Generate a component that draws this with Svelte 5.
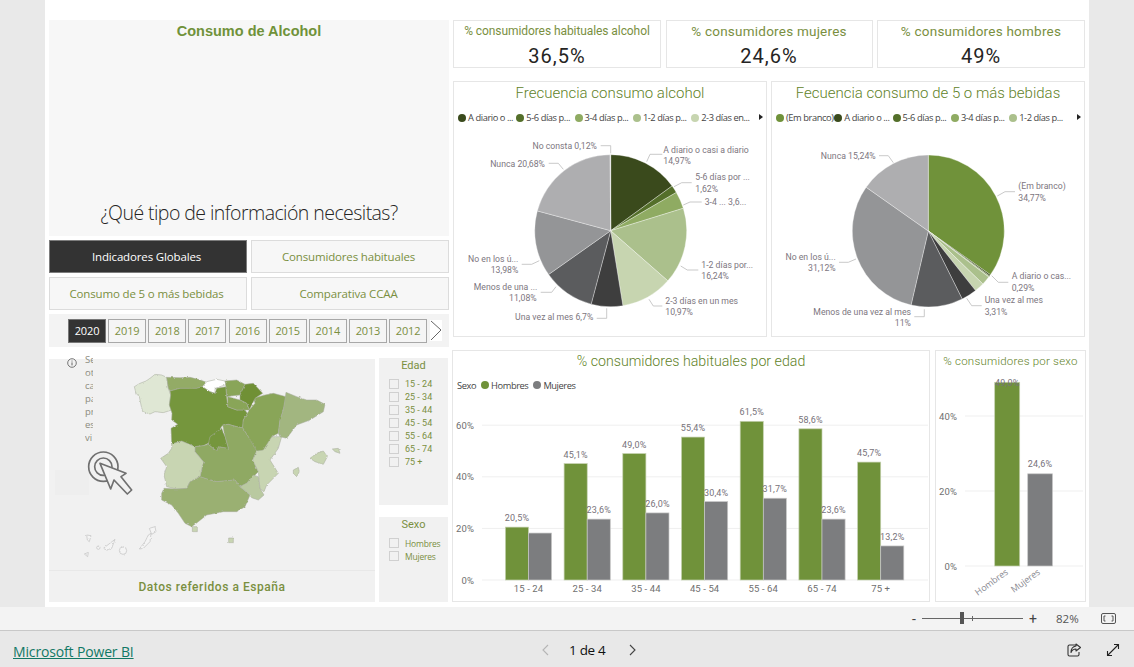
<script>
  const R = 76;
  function slices(data, cx, cy) {
    let a = 0;
    return data.map(([v, c]) => {
      const a0 = a; a += v / 100 * Math.PI * 2;
      const p = (t) => `${(cx + R * Math.sin(t)).toFixed(2)} ${(cy - R * Math.cos(t)).toFixed(2)}`;
      const large = a - a0 > Math.PI ? 1 : 0;
      return { d: `M${cx} ${cy}L${p(a0)}A${R} ${R} 0 ${large} 1 ${p(a)}Z`, c };
    });
  }
  const pieA = slices([[14.97,'#3a4a1c'],[1.62,'#546f2a'],[3.64,'#8fab62'],[16.24,'#abc08c'],[10.97,'#c7d5b0'],[6.7,'#3e3e3e'],[11.08,'#5b5c5e'],[13.98,'#949597'],[20.68,'#aeaeb0'],[0.12,'#d0d0d0']], 610.7, 230.7);
  const pieB = slices([[34.77,'#70923a'],[0.29,'#3a4a1c'],[0.2,'#546f2a'],[0.1,'#8fab62'],[1.9,'#abc08c'],[2.07,'#c7d5b0'],[3.31,'#3e3e3e'],[11,'#5b5c5e'],[31.12,'#949597'],[15.24,'#aeaeb0']], 928.3, 231);

  const labelsA = [
    { l: '600.7,145.7 610.7,145.7 610.7,153.3', t: [[597,149,'end','No consta 0,12%']] },
    { l: '662.3,154.3 650,154.3 646.7,161.7', t: [[663.3,153.3,'start','A diario o casi a diario'],[663.3,164,'start','14,97%']] },
    { l: '691.7,182.7 681.7,182.7 674,186.7', t: [[695.3,180,'start','5-6 días por ...'],[695.3,192,'start','1,62%']] },
    { l: '701.7,202 690,202 683.3,205', t: [[704.7,205.3,'start','3-4 ... 3,6...']] },
    { l: '698.3,270 687.3,270 680.7,266', t: [[701.3,268.3,'start','1-2 días por...'],[701.3,279.3,'start','16,24%']] },
    { l: '662.3,306 653.3,306 649,299.3', t: [[665.3,304.3,'start','2-3 días en un mes'],[665.3,315.3,'start','10,97%']] },
    { l: '596.7,318.3 606.7,318.3 606.7,308.3', t: [[593.3,320,'end','Una vez al mes 6,7%']] },
    { l: '540.7,292.3 551.7,292.3 556,286.7', t: [[537.3,290.3,'end','Menos de una ...'],[536.7,301.3,'end','11,08%']] },
    { l: '521.7,264.3 531.7,264.3 539.3,260.7', t: [[518.3,262.3,'end','No en los ú...'],[518.3,273.3,'end','13,98%']] },
    { l: '548.7,163.3 558.3,163.3 563.3,169.3', t: [[545,167.3,'end','Nunca 20,68%']] }
  ];
  const labelsB = [
    { l: '879,155.7 888.3,155.7 893.3,162.7', t: [[875.7,159.3,'end','Nunca 15,24%']] },
    { l: '1015,191.7 1005,191.7 997.3,196', t: [[1018.3,189.3,'start','(Em branco)'],[1018.3,201.3,'start','34,77%']] },
    { l: '1008.3,282.3 998.3,282.3 991.7,275.7', t: [[1011.7,279.3,'start','A diario o cas...'],[1011.7,291.3,'start','0,29%']] },
    { l: '981.7,305.7 971.7,305.7 966.7,298.3', t: [[984.7,303.3,'start','Una vez al mes'],[984.7,315,'start','3,31%']] },
    { l: '914.3,316.7 924.3,316.7 924.3,309.3', t: [[911,315,'end','Menos de una vez al mes'],[911,326,'end','11%']] },
    { l: '839,262.3 848.3,262.3 856,259', t: [[835.7,260.3,'end','No en los ú...'],[835.7,271.3,'end','31,12%']] }
  ];
  const legendA = [['A diario o ...','#3a4a1c'],['5-6 días p...','#546f2a'],['3-4 días p...','#8fab62'],['1-2 días p...','#abc08c'],['2-3 días en...','#c7d5b0']];
  const legendB = [['(Em branco)','#70923a'],['A diario o ...','#3a4a1c'],['5-6 días p...','#546f2a'],['3-4 días p...','#8fab62'],['1-2 días p...','#abc08c']];

  const years = [2020,2019,2018,2017,2016,2015,2014,2013,2012];
  const ages = ['15 - 24','25 - 34','35 - 44','45 - 54','55 - 64','65 - 74','75 +'];
  const men = [20.5,45.1,49,55.4,61.5,58.6,45.7];
  const women = [18.2,23.6,26,30.4,31.7,23.6,13.2];
  const showW = [false,true,true,true,true,true,true];
  const Y0 = 580, K = 2.58, BW = 23.1, STEP = 58.7, X0 = 505.4;
  const fmt = (v) => v.toFixed(1).replace('.', ',') + '%';

  const regions = [
    ['#dfe7d4','283,125 300,115 318,108 330,100 345,88 365,90 380,97 385,130 392,150 388,180 395,195 370,203 345,200 330,207 308,200 303,180 298,155 288,145'],
    ['#93ab66','380,97 420,98 450,97 475,103 500,112 487,125 470,130 445,130 420,130 390,138 385,130'],
    ['#ffffff','487,125 500,110 530,103 555,108 560,118 540,125 525,130 525,145 510,140'],
    ['#75963e','390,138 420,130 470,130 487,125 510,140 525,145 530,130 558,125 560,155 563,185 590,195 615,195 622,205 610,225 608,248 590,245 565,238 548,240 530,268 505,295 490,302 465,305 425,290 395,297 393,250 413,238 395,225 396,205 388,180 392,150'],
    ['#8fa963','465,305 490,302 505,298 530,318 535,305 565,310 555,275 548,240 565,238 590,245 608,248 625,275 645,300 650,318 638,345 655,380 640,395 620,415 600,425 585,405 530,410 510,405 480,395 490,350 465,320'],
    ['#75963e','510,275 545,250 555,275 565,310 535,305 530,318 505,298'],
    ['#c8d5b2','395,297 425,288 465,305 465,320 490,350 480,395 450,410 440,430 410,432 380,425 372,390 380,365 362,340 385,325 395,310'],
    ['#9ab072','372,430 410,432 440,430 450,410 480,395 510,405 530,410 585,405 600,425 630,450 615,485 590,500 550,500 500,510 475,530 455,545 435,535 415,505 395,480 365,465 365,445'],
    ['#b9c9a0','600,425 620,415 640,390 655,395 660,430 672,450 655,465 635,458 625,445'],
    ['#c8d5b2','650,318 670,310 695,275 725,275 715,310 690,345 715,385 695,405 680,420 672,440 660,430 655,380 638,345'],
    ['#89a558','640,160 675,150 700,145 738,155 730,195 720,225 715,265 695,275 670,315 650,318 625,275 608,248 610,225 622,205 628,195 645,175'],
    ['#a2b680','738,142 770,155 800,165 830,165 855,178 850,200 810,225 770,240 740,280 720,275 715,265 720,225 730,195'],
    ['#89a558','558,125 555,108 590,105 615,118 600,150 580,152 560,155'],
    ['#6f9036','615,118 640,115 668,145 645,160 628,195 620,175 600,165 600,150'],
    ['#89a558','563,155 600,165 620,175 628,195 615,195 590,195 563,185'],
    ['#c8d5b2','810,340 830,325 850,318 862,335 850,358 825,350'],
    ['#c8d5b2','877,312 895,310 900,325 885,320'],
    ['#c8d5b2','760,375 775,367 778,380 770,395 760,385'],
    ['#c8d5b2','457,545 472,545 472,560 457,560'],
    ['#c8d5b2','566,579 580,579 580,593 566,593']
  ];
  const canary = [
    '328,550 345,545 348,560 335,568',
    '325,570 333,565 330,590 310,610 298,612 315,590',
    '190,610 225,583 215,610 200,615',
    '140,570 153,572 148,590 142,585',
    '133,627 145,622 143,635'
  ];
</script>

<div class="app">
  <div class="stage">
    <div class="page">
      <div class="left">
        <div class="hero">
          <div class="brand">Consumo de Alcohol</div>
          <div class="question">¿Qué tipo de información necesitas?</div>
        </div>
        <div class="nav">
          <div class="navbtn active">Indicadores Globales</div>
          <div class="navbtn">Consumidores habituales</div>
          <div class="navbtn">Consumo de 5 o más bebidas</div>
          <div class="navbtn">Comparativa CCAA</div>
        </div>
        <div class="years">
          {#each years as y, i}
            <div class="year" class:on={i === 0}>{y}</div>
          {/each}
          <div class="next">
            <svg width="12" height="20" viewBox="0 0 12 20"><polyline points="1,1 11,10 1,20" fill="none" stroke="#666" stroke-width="1"/></svg>
          </div>
        </div>
        <div class="lower">
          <div class="mappanel">
            <svg class="map" width="326" height="211" viewBox="27 42 978 633">
              <defs>
                <filter id="rough" x="-5%" y="-5%" width="110%" height="110%">
                  <feTurbulence type="fractalNoise" baseFrequency=".12" numOctaves="2" seed="4"/>
                  <feDisplacementMap in="SourceGraphic" scale="7" xChannelSelector="R" yChannelSelector="G"/>
                </filter>
              </defs>
              <rect x="45" y="375" width="102" height="75" fill="#eeeeee"/>
              <g filter="url(#rough)">
                {#each regions as [c, pts]}
                  <polygon points={pts} fill={c} stroke="#a9ab9f" stroke-width="1.6" stroke-linejoin="round"/>
                {/each}
                {#each canary as pts}
                  <polygon points={pts} fill="#f4f4f4" stroke="#c4c4c4" stroke-width="2.2" stroke-linejoin="round"/>
                {/each}
                <circle cx="249" cy="617" r="11" fill="#f4f4f4" stroke="#c4c4c4" stroke-width="2.2"/>
                <circle cx="175" cy="608" r="5" fill="#f4f4f4" stroke="#c4c4c4" stroke-width="2.2"/>
              </g>
              <circle cx="190" cy="365" r="44" fill="none" stroke="#707070" stroke-width="5"/>
              <circle cx="190" cy="365" r="26" fill="none" stroke="#707070" stroke-width="5"/>
              <polygon points="180,355 258,385 243,395 275,435 262,447 222,405 212,432" fill="#f1f1f1" stroke="#707070" stroke-width="5" stroke-linejoin="round"/>
            </svg>
            <div class="mapfoot">Datos referidos a España</div>
          </div>
          <div class="info">
            <svg width="10" height="10" viewBox="0 0 10 10"><circle cx="5" cy="5" r="4.3" fill="none" stroke="#555" stroke-width=".8"/><path d="M5 4.4v3M5 2.600v.9" stroke="#555" stroke-width=".9"/></svg>
            <div class="infotext"><span>Se</span><span>ot</span><span>ca</span><span>pa</span><span>pr</span><span>es</span><span>vi</span></div>
          </div>
          <div class="slicers">
            <div class="slicer edad">
              <div class="sltitle">Edad</div>
              {#each ages as a}
                <div class="opt"><i></i>{a}</div>
              {/each}
            </div>
            <div class="slicer sexo">
              <div class="sltitle">Sexo</div>
              <div class="opt small"><i></i>Hombres</div>
              <div class="opt small"><i></i>Mujeres</div>
            </div>
          </div>
        </div>
      </div>

      <div class="right">
        <div class="kpis">
          <div class="kpi"><div class="kt first">% consumidores habituales alcohol</div><div class="kv">36,5%</div></div>
          <div class="kpi"><div class="kt">% consumidores mujeres</div><div class="kv">24,6%</div></div>
          <div class="kpi"><div class="kt">% consumidores hombres</div><div class="kv">49%</div></div>
        </div>
        <div class="pies">
          <div class="card">
            <div class="ctitle">Frecuencia consumo alcohol</div>
            <div class="legend">
              {#each legendA as [t, c]}
                <div class="li"><b style="background:{c}"></b>{t}</div>
              {/each}
              <span class="more"></span>
            </div>
            <svg width="314" height="210" viewBox="453 127 314 210">
              {#each pieA as s}<path d={s.d} fill={s.c} stroke="#fff" stroke-opacity=".55" stroke-width=".6"/>{/each}
              {#each labelsA as g}
                <polyline points={g.l} class="ll"/>
                {#each g.t as [x, y, a, txt]}<text {x} {y} text-anchor={a} class="pl">{txt}</text>{/each}
              {/each}
            </svg>
          </div>
          <div class="card">
            <div class="ctitle">Fecuencia consumo de 5 o más bebidas</div>
            <div class="legend">
              {#each legendB as [t, c]}
                <div class="li"><b style="background:{c}"></b>{t}</div>
              {/each}
              <span class="more"></span>
            </div>
            <svg width="314" height="210" viewBox="771 127 314 210">
              {#each pieB as s}<path d={s.d} fill={s.c} stroke="#fff" stroke-opacity=".55" stroke-width=".6"/>{/each}
              {#each labelsB as g}
                <polyline points={g.l} class="ll"/>
                {#each g.t as [x, y, a, txt]}<text {x} {y} text-anchor={a} class="pl">{txt}</text>{/each}
              {/each}
            </svg>
          </div>
        </div>
        <div class="bars">
          <div class="card">
            <div class="ctitle wide">% consumidores habituales por edad</div>
            <div class="sexlegend"><span>Sexo</span><div class="li"><b style="background:#70923a"></b>Hombres</div><div class="li"><b style="background:#7c7d7f"></b>Mujeres</div></div>
            <svg width="478" height="207" viewBox="452 395 478 207">
              {#each [0,20,40,60] as t}
                <line x1="482" x2="928" y1={Y0 - t * K} y2={Y0 - t * K} class="grid"/>
                <text x="474" y={Y0 - t * K + 3.5} text-anchor="end" class="ax">{t}%</text>
              {/each}
              {#each ages as a, i}
                <rect x={X0 + i * STEP} y={Y0 - men[i] * K} width={BW} height={men[i] * K} class="g"/>
                <rect x={X0 + i * STEP + BW} y={Y0 - women[i] * K} width={BW} height={women[i] * K} class="h"/>
                <text x={X0 + i * STEP + BW / 2} y={Y0 - men[i] * K - 6} text-anchor="middle" class="dl">{fmt(men[i])}</text>
                {#if showW[i]}
                  <text x={X0 + i * STEP + BW * 1.5} y={Y0 - women[i] * K - 6} text-anchor="middle" class="dl">{fmt(women[i])}</text>
                {/if}
                <text x={X0 + i * STEP + BW} y="592" text-anchor="middle" class="ax">{a}</text>
              {/each}
            </svg>
          </div>
          <div class="card">
            <div class="ctitle small">% consumidores por sexo</div>
            <svg width="151" height="230" viewBox="935 372 151 230">
              {#each [0,20,40] as t}
                <line x1="965" x2="1083" y1={566 - t * 3.75} y2={566 - t * 3.75} class="grid"/>
                <text x="957" y={566 - t * 3.75 + 3.5} text-anchor="end" class="ax">{t}%</text>
              {/each}
              <rect x="994.7" y="382.3" width="25" height="183.7" class="g"/>
              <rect x="1027.7" y="473.8" width="24.8" height="92.2" class="h"/>
              <text x="1007.2" y="386" text-anchor="middle" class="dl">49,0%</text>
              <text x="1040" y="467" text-anchor="middle" class="dl">24,6%</text>
              <text transform="translate(1007 571) rotate(-36)" text-anchor="end" dy="3" class="rot">Hombres</text>
              <text transform="translate(1039 571) rotate(-36)" text-anchor="end" dy="3" class="rot">Mujeres</text>
            </svg>
          </div>
        </div>
      </div>
    </div>
  </div>

  <div class="zoombar">
    <span class="zm">-</span>
    <div class="slider"><em></em><u></u></div>
    <span class="zp">+</span>
    <span class="pct">82%</span>
    <svg width="15" height="11" viewBox="0 0 15 11"><rect x=".5" y=".5" width="14" height="10" rx="1.5" fill="none" stroke="#555"/><path d="M4.500 3H3v5h1.500M10.500 3H12v5h-1.500" fill="none" stroke="#555"/></svg>
  </div>

  <div class="footer">
    <span class="ms">Microsoft Power BI</span>
    <div class="pager">
      <svg width="8" height="12" viewBox="0 0 8 12"><polyline points="7,1 2,6 7,11" fill="none" stroke="#b5b5b5" stroke-width="1.100"/></svg>
      <span class="pg">1 de 4</span>
      <svg width="8" height="12" viewBox="0 0 8 12"><polyline points="1,1 6,6 1,11" fill="none" stroke="#444" stroke-width="1.100"/></svg>
    </div>
    <div class="acts">
      <svg width="14" height="14" viewBox="0 0 14 14"><path d="M9 2H2.500A1.500 1.500 0 0 0 1 3.500v8A1.500 1.500 0 0 0 2.500 13h8a1.500 1.500 0 0 0 1.500-1.500V9" fill="none" stroke="#333" stroke-width="1.100"/><path d="M9 1l4.500 3.500L9 8V6C6.500 6 5 7 4 9.500 4 6 6 3.500 9 3z" fill="none" stroke="#333" stroke-width="1.100" stroke-linejoin="round"/></svg>
      <svg width="14" height="14" viewBox="0 0 14 14"><path d="M1.500 12.500l11-11M8 1.500h4.500V6M1.500 8v4.500H6" fill="none" stroke="#222" stroke-width="1.100"/></svg>
    </div>
  </div>
</div>

<style>
  :global(body) { margin: 0; background: #e9e9e9; }
  .app { width: 1134px; height: 667px; overflow: hidden; display: flex; flex-direction: column; font-family: "Open Sans", sans-serif; color: #70923a; }
  .stage { height: 607px; flex: none; padding-left: 45px; }
  .page { width: 1044px; height: 607px; box-sizing: border-box; background: #fff; padding: 20px 0 0 4px; display: flex; gap: 3px; }

  .left { width: 400px; flex: none; display: flex; flex-direction: column; }
  .hero { height: 216px; background: #f7f7f7; display: flex; flex-direction: column; justify-content: space-between; align-items: center; flex: none; }
  .brand { font: bold 14.5px "Liberation Sans", sans-serif; color: #70923a; margin-top: 3px; }
  .question { font-size: 19.5px; font-weight: 300; color: #252423; letter-spacing: -.56px; margin-bottom: 10px; white-space: nowrap; }
  .nav { margin-top: 4px; display: grid; grid-template-columns: 198px 198px; column-gap: 4px; row-gap: 4px; flex: none; }
  .navbtn { height: 33px; box-sizing: border-box; border: 1px solid #dcdcdc; background: #f7f7f7; display: flex; align-items: center; justify-content: center; font-size: 11.5px; letter-spacing: -.15px; color: #7a8f3f; padding-right: 3px; }
  .navbtn.active { background: #333; color: #fff; border-color: #7d7d7d; }
  .years { margin-top: 4px; height: 33px; box-sizing: border-box; background: #f3f3f3; display: flex; align-items: center; padding-left: 19px; gap: 2.15px; flex: none; }
  .year { width: 38px; height: 24px; box-sizing: border-box; border: 1px solid #a8a8a8; display: flex; align-items: center; justify-content: center; font-size: 11px; letter-spacing: -.15px; color: #7a8f3f; background: #f5f5f5; padding-bottom: 1px; }
  .year.on { background: #333; color: #fff; border-color: #777; }
  .next { width: 12px; height: 21px; background: #fff; margin-left: 1px; }
  .next svg { display: block; }

  .lower { position: relative; margin-top: 11px; display: flex; gap: 4px; height: 244px; }
  .mappanel { width: 326px; height: 243px; margin-top: 1px; background: #f1f1f1; display: flex; flex-direction: column; flex: none; }
  .map { display: block; flex: none; }
  .mapfoot { height: 32px; box-sizing: border-box; border-top: 1px solid #e8e8e8; display: flex; align-items: center; justify-content: center; font: 500 12px Roboto, sans-serif; letter-spacing: .55px; color: #7a8f3f; }
  .info { position: absolute; left: 18px; top: -5px; display: flex; gap: 8px; }
  .info svg { margin-top: 5px; }
  .infotext { width: 8px; overflow: hidden; display: flex; flex-direction: column; font-size: 9.5px; line-height: 13px; color: #8c8c80; margin-top: 0; }
  .slicers { width: 69px; display: flex; flex-direction: column; gap: 12px; }
  .slicer { background: #f1f1f1; flex: none; box-sizing: border-box; padding-left: 10px; color: #70923a; }
  .edad { height: 147px; }
  .sexo { height: 85px; }
  .sltitle { text-align: center; font: 11px Roboto, sans-serif; margin-left: -10px; padding: 0 0 4px; height: 14px; line-height: 14px; margin-top: 1px; color: #7a8f3f; }
  .opt { display: flex; align-items: center; height: 13px; font: 9px Roboto, sans-serif; color: #7a8f3f; white-space: nowrap; position: relative; top: .5px; }
  .opt.small { font-family: "Open Sans", sans-serif; font-size: 8.5px; letter-spacing: -.2px; }
  .opt i { width: 8px; height: 8px; border: 1px solid #d0d0d0; margin-right: 6px; flex: none; }

  .right { flex: none; width: 634px; display: flex; flex-direction: column; }
  .kpis { display: grid; grid-template-columns: 208px 207px 208px; margin-left: 1px; column-gap: 4.5px; }
  .kpi { height: 48px; box-sizing: border-box; border: 1px solid #e6e6e6; text-align: center; }
  .kt { font: 13.5px Roboto, sans-serif; letter-spacing: .23px; color: #7a8f3f; margin-top: 2px; line-height: 16px; white-space: nowrap; }
  .kt.first { font-size: 12px; letter-spacing: -.08px; margin-top: 2px; }
  .kv { font: 20px Roboto, sans-serif; letter-spacing: 1px; color: #252423; line-height: 24px; margin-top: 5px; }
  .pies { display: grid; grid-template-columns: 314px 314px; column-gap: 4px; margin: 13px 0 0 1px; height: 256px; }
  .card { position: relative; box-sizing: border-box; border: 1px solid #e6e6e6; }
  .card svg { display: block; margin: -1px; }
  .ctitle { font: 300 15px Roboto, sans-serif; text-align: center; color: #5f8228; height: 20px; line-height: 20px; margin-top: 1px; }
  .ctitle.wide { font-size: 14.2px; margin-top: 0; height: 21px; }
  .ctitle.small { font-size: 11.5px; letter-spacing: .22px; margin-top: 0; height: 22px; }
  .legend { display: grid; grid-template-columns: repeat(5, 58.3px); height: 25px; box-sizing: border-box; padding: 4px 0 0 4px; align-items: center; position: relative; }
  .li { display: flex; align-items: center; gap: 2px; font-size: 9.3px; letter-spacing: -.42px; color: #444; white-space: nowrap; }
  .li b { width: 8px; height: 8px; border-radius: 50%; flex: none; }
  .more { position: absolute; right: 3px; top: 11px; border-left: 4px solid #222; border-top: 3.5px solid transparent; border-bottom: 3.5px solid transparent; }
  .bars { display: grid; grid-template-columns: 478px 151px; column-gap: 5px; margin-top: 13px; height: 252px; }
  .sexlegend { display: flex; align-items: center; gap: 5px; padding: 2px 0 0 4px; box-sizing: border-box; height: 24px; font-size: 9.3px; letter-spacing: -.42px; color: #444; }

  .pl { font: 8.7px Roboto, sans-serif; fill: #7d7680; }
  .ll { fill: none; stroke: #bbb; stroke-width: .8; }
  .grid { stroke: #efefef; stroke-width: 1; }
  .ax { font: 9.5px Roboto, sans-serif; letter-spacing: .1px; fill: #6f6f6f; }
  .dl { font: 9px Roboto, sans-serif; letter-spacing: .2px; fill: #77727a; }
  .rot { font: 9px "Open Sans", sans-serif; letter-spacing: -.1px; fill: #8a8a92; }
  .g { fill: #70923a; stroke: #c4d0ae; stroke-width: .7; }
  .h { fill: #7c7d7f; stroke: #c8c8c8; stroke-width: .7; }

  .zoombar { height: 24px; box-sizing: border-box; background: #f3f3f3; border-bottom: 1px solid #c8c8c8; display: flex; align-items: center; padding-left: 912px; flex: none; color: #444; }
  .zm { width: 10px; font: 14px Roboto, sans-serif; line-height: 14px; }
  .slider { position: relative; width: 101px; height: 1px; background: #666; }
  .slider em { position: absolute; left: 38px; top: -6px; width: 4px; height: 12px; background: #555; }
  .slider u { position: absolute; left: 50px; top: -2px; width: 1px; height: 5px; background: #666; }
  .zp { width: 24px; padding-left: 5px; box-sizing: border-box; font: 14px Roboto, sans-serif; margin-left: 1px; }
  .pct { width: 53px; box-sizing: border-box; padding-left: 8px; font-size: 11.5px; color: #555; }
  .footer { flex: 1; background: #e8e8e8; display: grid; grid-template-columns: 528px 110px 1fr; align-items: center; padding: 2px 0 0 13px; color: #222; }
  .ms { font-size: 14px; letter-spacing: -.15px; color: #117865; text-decoration: underline; position: relative; top: 1px; }
  .pager { display: flex; align-items: center; gap: 20px; font-size: 13.5px; letter-spacing: -.3px; font-weight: 500; color: #111; }
  .pg { min-width: 38px; margin-right: 2px; }
  .acts { display: flex; justify-content: flex-end; gap: 25px; padding-right: 14px; }
</style>
